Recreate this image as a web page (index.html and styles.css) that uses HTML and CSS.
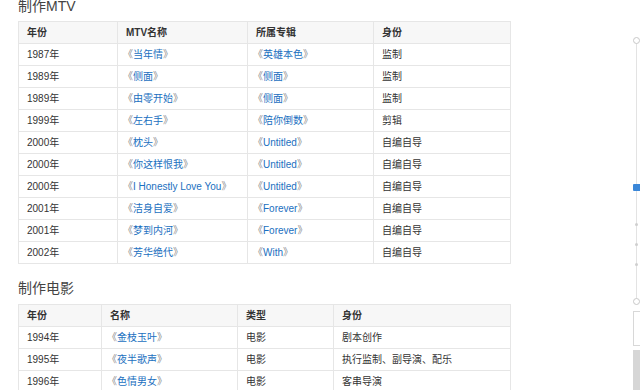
FILE: index.html
```html
<!DOCTYPE html>
<html lang="zh-CN">
<head>
<meta charset="utf-8">
<title>作品</title>
<link rel="stylesheet" href="styles.css">
</head>
<body>
<div class="page">
  <main class="content">
    <h3 class="title first">制作MTV</h3>
    <table class="tbl t1">
      <colgroup><col class="c1"><col class="c2"><col class="c3"><col class="c4"></colgroup>
      <tr class="head"><th>年份</th><th>MTV名称</th><th>所属专辑</th><th>身份</th></tr>
      <tr><td>1987年</td><td><span class="ql">《</span><a>当年情</a><span class="qr">》</span></td><td><span class="ql">《</span><a>英雄本色</a><span class="qr">》</span></td><td>监制</td></tr>
      <tr><td>1989年</td><td><span class="ql">《</span><a>侧面</a><span class="qr">》</span></td><td><span class="ql">《</span><a>侧面</a><span class="qr">》</span></td><td>监制</td></tr>
      <tr><td>1989年</td><td><span class="ql">《</span><a>由零开始</a><span class="qr">》</span></td><td><span class="ql">《</span><a>侧面</a><span class="qr">》</span></td><td>监制</td></tr>
      <tr><td>1999年</td><td><span class="ql">《</span><a>左右手</a><span class="qr">》</span></td><td><span class="ql">《</span><a>陪你倒数</a><span class="qr">》</span></td><td>剪辑</td></tr>
      <tr><td>2000年</td><td><span class="ql">《</span><a>枕头</a><span class="qr">》</span></td><td><span class="ql">《</span><a>Untitled</a><span class="qr">》</span></td><td>自编自导</td></tr>
      <tr><td>2000年</td><td><span class="ql">《</span><a>你这样恨我</a><span class="qr">》</span></td><td><span class="ql">《</span><a>Untitled</a><span class="qr">》</span></td><td>自编自导</td></tr>
      <tr><td>2000年</td><td><span class="ql">《</span><a>I Honestly Love You</a><span class="qr">》</span></td><td><span class="ql">《</span><a>Untitled</a><span class="qr">》</span></td><td>自编自导</td></tr>
      <tr><td>2001年</td><td><span class="ql">《</span><a>洁身自爱</a><span class="qr">》</span></td><td><span class="ql">《</span><a>Forever</a><span class="qr">》</span></td><td>自编自导</td></tr>
      <tr><td>2001年</td><td><span class="ql">《</span><a>梦到内河</a><span class="qr">》</span></td><td><span class="ql">《</span><a>Forever</a><span class="qr">》</span></td><td>自编自导</td></tr>
      <tr><td>2002年</td><td><span class="ql">《</span><a>芳华绝代</a><span class="qr">》</span></td><td><span class="ql">《</span><a>With</a><span class="qr">》</span></td><td>自编自导</td></tr>
    </table>

    <h3 class="title">制作电影</h3>
    <table class="tbl t2">
      <colgroup><col class="d1"><col class="d2"><col class="d3"><col class="d4"></colgroup>
      <tr class="head"><th>年份</th><th>名称</th><th>类型</th><th>身份</th></tr>
      <tr><td>1994年</td><td><span class="ql">《</span><a>金枝玉叶</a><span class="qr">》</span></td><td>电影</td><td>剧本创作</td></tr>
      <tr><td>1995年</td><td><span class="ql">《</span><a>夜半歌声</a><span class="qr">》</span></td><td>电影</td><td>执行监制、副导演、配乐</td></tr>
      <tr><td>1996年</td><td><span class="ql">《</span><a>色情男女</a><span class="qr">》</span></td><td>电影</td><td>客串导演</td></tr>
    </table>
  </main>

  <aside class="sidenav" aria-hidden="true">
    <span class="line"></span>
    <span class="ring top"></span>
    <span class="mark"></span>
    <span class="dot d-a"></span>
    <span class="dot d-b"></span>
    <span class="dot d-c"></span>
    <span class="ring bottom"></span>
    <span class="box"></span>
    <span class="gray"></span>
  </aside>
</div>
</body>
</html>
```

FILE: styles.css
```css
html, body {
  margin: 0;
  padding: 0;
  background: #fff;
  overflow: hidden;
}

body {
  font-family: "Liberation Sans", "Noto Sans CJK SC", sans-serif;
  font-size: 10px;
  color: #333;
}

.page {
  position: relative;
  width: 640px;
  height: 390px;
  overflow: hidden;
}

.content {
  padding-left: 18px;
  width: 494px;
}

.title {
  margin: 0 0 5px 0;
  font-size: 14px;
  font-weight: normal;
  line-height: 22px;
  color: #444;
}

.title.first {
  margin-top: -5px;
  margin-bottom: 4px;
}

.tbl {
  border-collapse: collapse;
  table-layout: fixed;
  width: 492px;
  margin-bottom: 13px;
  border: 1px solid #e6e6e6;
}

.tbl th,
.tbl td {
  border: 1px solid #e6e6e6;
  height: 21px;
  line-height: 21px;
  padding: 0 0 0 8px;
  text-align: left;
  white-space: nowrap;
  overflow: hidden;
  box-sizing: border-box;
  font-size: 10px;
}

.tbl tr {
  height: 22px;
}

.tbl .head th {
  background: #f7f7f7;
  font-weight: bold;
  color: #333;
}

.tbl td {
  color: #333;
}

.tbl a {
  color: #1a6fc0;
  text-decoration: none;
}

.ql,
.qr {
  color: #888;
}

.ql {
  margin-left: -3px;
}

.qr {
  margin-right: -3px;
}

.c1 { width: 99px; }
.c2 { width: 130px; }
.c3 { width: 126px; }
.c4 { width: 137px; }

.d1 { width: 83px; }
.d2 { width: 136px; }
.d3 { width: 96px; }
.d4 { width: 177px; }

/* right-side floating navigator */
.sidenav {
  position: absolute;
  top: 0;
  left: 630px;
  width: 10px;
  height: 390px;
}

.sidenav span {
  position: absolute;
  display: block;
}

.line {
  left: 6px;
  top: 42px;
  width: 1px;
  height: 258px;
  background: #e3e3e3;
}

.ring {
  left: 3px;
  width: 5px;
  height: 5px;
  border: 1px solid #c8c8c8;
  border-radius: 50%;
  background: #fff;
}

.ring.top { top: 37px; }
.ring.bottom { top: 298px; }

.mark {
  left: 3px;
  top: 184px;
  width: 8px;
  height: 7px;
  background: #3b87d8;
  border-radius: 1px;
}

.dot {
  left: 5px;
  width: 3px;
  height: 3px;
  border-radius: 50%;
  background: #cfcfcf;
}

.d-a { top: 223px; }
.d-b { top: 243px; }
.d-c { top: 263px; }

.box {
  left: 3px;
  top: 311px;
  width: 10px;
  height: 33px;
  border: 1px solid #d8d8d8;
  background: #fff;
}

.gray {
  left: 3px;
  top: 350px;
  width: 10px;
  height: 40px;
  background: #d6d6d6;
}
```
